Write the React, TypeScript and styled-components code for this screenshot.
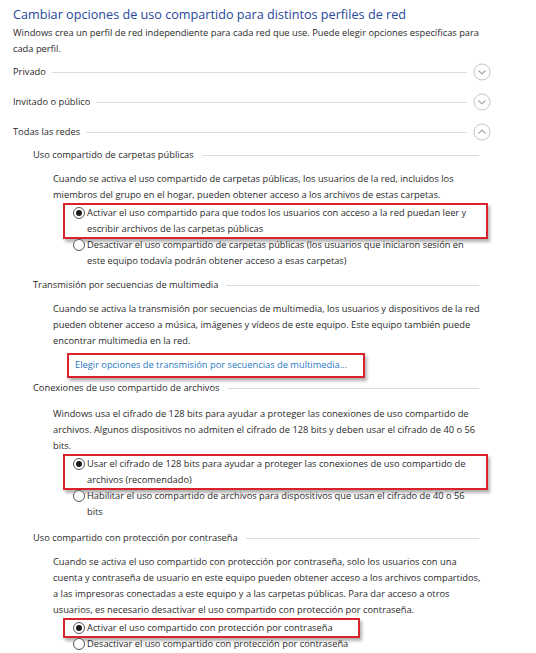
import * as React from 'react';
import styled, { createGlobalStyle } from 'styled-components';

const GlobalStyle = createGlobalStyle`
    html, body {
        margin: 0;
        padding: 0;
        background: #ffffff;
        height: 653px;
        overflow: hidden;
    }
    body {
        font-family: 'Open Sans', 'Noto Sans', 'Liberation Sans', sans-serif;
        -webkit-font-smoothing: antialiased;
    }
`;

const Page = styled.div`
    width: 478px;
    padding: 4px 0 0 13px;
    color: #2a2a2a;
    font-size: 9.3px;
    line-height: 16px;
`;

const Title = styled.h1`
    margin: 0;
    font-size: 12.65px;
    line-height: 20px;
    font-weight: 400;
    color: #27479c;
    white-space: nowrap;
`;

const Intro = styled.p`
    margin: 1px 0 0;
    white-space: nowrap;
`;

const ProfileRow = styled.div`
    display: flex;
    align-items: center;
    height: 30px;
    white-space: nowrap;
`;

const Rule = styled.div`
    flex: 1;
    height: 1px;
    background: #dcdcdc;
    margin: 0 6px 0 ${(p: { gap: number }) => p.gap}px;
`;

const ChevronIcon = styled.svg`
    width: 18px;
    height: 18px;
    flex: none;
`;

const SectionBlock = styled.div`
    padding-left: 20px;
`;

const SectionHead = styled.div`
    display: flex;
    align-items: center;
    height: 16px;
    margin: ${(p: { top: number }) => p.top}px 6px 0 0;
    white-space: nowrap;
`;

const Para = styled.p`
    margin: ${(p: { top: number }) => p.top}px 0 0;
    padding-left: 20px;
    white-space: nowrap;
`;

const Options = styled.div`
    margin-top: 2px;
    padding-left: 40px;
`;

const OptionRow = styled.div`
    display: flex;
    align-items: flex-start;
    gap: 2px;
    white-space: nowrap;
`;

const Highlight = styled.div`
    box-sizing: border-box;
    width: ${(p: { width: number }) => p.width}px;
    margin: -2px 0 -2px -10px;
    padding-left: 8px;
    border: 2px solid #d9232c;
    box-shadow: 2px 3px 3px rgba(0, 0, 0, 0.3);
`;

const Radio = styled.span`
    box-sizing: border-box;
    flex: none;
    width: 12px;
    height: 12px;
    margin-top: 2px;
    border-radius: 50%;
    border: 1px solid #555555;
    background: #fff;
    display: flex;
    align-items: center;
    justify-content: center;
    &::after {
        content: '';
        width: 6px;
        height: 6px;
        border-radius: 50%;
        background: ${(p: { checked?: boolean }) => (p.checked ? '#1a1a1a' : 'transparent')};
    }
`;

const LinkBox = styled.div`
    box-sizing: border-box;
    width: 298px;
    margin: 4px 0 0 34px;
    padding: 2px 6px 3px 6px;
    border: 2px solid #d9232c;
    box-shadow: 2px 3px 3px rgba(0, 0, 0, 0.3);
`;

const Link = styled.a`
    color: #2b79c2;
    text-decoration: none;
    white-space: nowrap;
`;

const Chevron = ({ up }: { up?: boolean }) => (
    <ChevronIcon viewBox="0 0 18 18">
        <circle cx="9" cy="9" r="8" fill="none" stroke="#c6c6c6" strokeWidth="1" />
        <polyline
            points={up ? '5.5,10.5 9,7 12.5,10.5' : '5.5,7.5 9,11 12.5,7.5'}
            fill="none"
            stroke="#a9a9a9"
            strokeWidth="1.2"
        />
    </ChevronIcon>
);

const Profile = ({ label, up }: { label: string; up?: boolean }) => (
    <ProfileRow>
        {label}
        <Rule gap={6} />
        <Chevron up={up} />
    </ProfileRow>
);

const Head = ({ label, top }: { label: string; top: number }) => (
    <SectionHead top={top}>
        {label}
        <Rule gap={8} />
    </SectionHead>
);

const Option = ({ checked, lines }: { checked?: boolean; lines: string[] }) => (
    <OptionRow>
        <Radio checked={checked} />
        <div>
            {lines.map((l) => (
                <div key={l}>{l}</div>
            ))}
        </div>
    </OptionRow>
);

const Lines = ({ lines }: { lines: string[] }) => (
    <>
        {lines.map((l, i) => (
            <React.Fragment key={l}>
                {i > 0 && <br />}
                {l}
            </React.Fragment>
        ))}
    </>
);

const App = () => (
    <>
        <GlobalStyle />
        <Page>
            <Title>Cambiar opciones de uso compartido para distintos perfiles de red</Title>
            <Intro>
                <Lines
                    lines={[
                        'Windows crea un perfil de red independiente para cada red que use. Puede elegir opciones específicas para',
                        'cada perfil.',
                    ]}
                />
            </Intro>
            <Profile label="Privado" />
            <Profile label="Invitado o público" />
            <Profile label="Todas las redes" up />

            <SectionBlock>
                <Head label="Uso compartido de carpetas públicas" top={0} />
                <Para top={8}>
                    <Lines
                        lines={[
                            'Cuando se activa el uso compartido de carpetas públicas, los usuarios de la red, incluidos los',
                            'miembros del grupo en el hogar, pueden obtener acceso a los archivos de estas carpetas.',
                        ]}
                    />
                </Para>
                <Options>
                    <Highlight width={425}>
                        <Option
                            checked
                            lines={[
                                'Activar el uso compartido para que todos los usuarios con acceso a la red puedan leer y',
                                'escribir archivos de las carpetas públicas',
                            ]}
                        />
                    </Highlight>
                    <Option
                        lines={[
                            'Desactivar el uso compartido de carpetas públicas (los usuarios que iniciaron sesión en',
                            'este equipo todavía podrán obtener acceso a esas carpetas)',
                        ]}
                    />
                </Options>

                <Head label="Transmisión por secuencias de multimedia" top={8} />
                <Para top={8}>
                    <Lines
                        lines={[
                            'Cuando se activa la transmisión por secuencias de multimedia, los usuarios y dispositivos de la red',
                            'pueden obtener acceso a música, imágenes y vídeos de este equipo. Este equipo también puede',
                            'encontrar multimedia en la red.',
                        ]}
                    />
                </Para>
                <LinkBox>
                    <Link href="#">Elegir opciones de transmisión por secuencias de multimedia...</Link>
                </LinkBox>

                <Head label="Conexiones de uso compartido de archivos" top={2} />
                <Para top={10}>
                    <Lines
                        lines={[
                            'Windows usa el cifrado de 128 bits para ayudar a proteger las conexiones de uso compartido de',
                            'archivos. Algunos dispositivos no admiten el cifrado de 128 bits y deben usar el cifrado de 40 o 56',
                            'bits.',
                        ]}
                    />
                </Para>
                <Options>
                    <Highlight width={425}>
                        <Option
                            checked
                            lines={[
                                'Usar el cifrado de 128 bits para ayudar a proteger las conexiones de uso compartido de',
                                'archivos (recomendado)',
                            ]}
                        />
                    </Highlight>
                    <Option
                        lines={[
                            'Habilitar el uso compartido de archivos para dispositivos que usan el cifrado de 40 o 56',
                            'bits',
                        ]}
                    />
                </Options>

                <Head label="Uso compartido con protección por contraseña" top={10} />
                <Para top={8}>
                    <Lines
                        lines={[
                            'Cuando se activa el uso compartido con protección por contraseña, solo los usuarios con una',
                            'cuenta y contraseña de usuario en este equipo pueden obtener acceso a los archivos compartidos,',
                            'a las impresoras conectadas a este equipo y a las carpetas públicas. Para dar acceso a otros',
                            'usuarios, es necesario desactivar el uso compartido con protección por contraseña.',
                        ]}
                    />
                </Para>
                <Options>
                    <Highlight width={297}>
                        <Option checked lines={['Activar el uso compartido con protección por contraseña']} />
                    </Highlight>
                    <Option lines={['Desactivar el uso compartido con protección por contraseña']} />
                </Options>
            </SectionBlock>
        </Page>
    </>
);

export default App;
